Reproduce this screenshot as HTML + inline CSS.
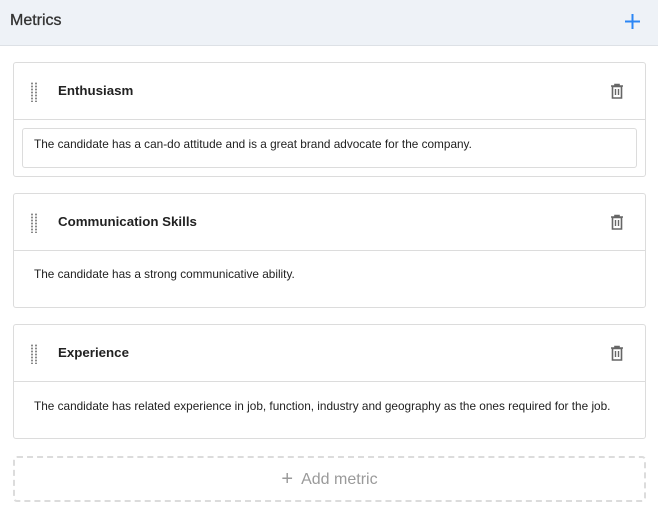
<!DOCTYPE html><html><head><style>
*{box-sizing:border-box;margin:0;padding:0}
body{width:658px;height:514px;background:#fff;font-family:"Liberation Sans",sans-serif;position:relative;overflow:hidden;color:#222}
.hd{position:absolute;left:0;top:0;width:658px;height:46px;background:#eef2f7;border-bottom:1px solid #dde1e6}
.hd .t{position:absolute;left:10px;top:12px;font-size:16px;color:#333;-webkit-text-stroke:0.3px #333}
.plus{position:absolute;left:624px;top:13px}
.card{position:absolute;left:13px;width:633px;height:115px;border:1px solid #dcdcdc;border-radius:3px}
.card .h{height:57px;border-bottom:1px solid #dcdcdc;position:relative}
.card .n{position:absolute;left:44px;top:20px;font-size:13.3px;font-weight:bold;color:#222}
.drag{position:absolute;left:16px;top:19px;width:8px;height:20px;background-image:radial-gradient(circle,#888 0.9px,transparent 1.2px);background-size:4px 3px}
.trash{position:absolute;left:596px;top:20px}
.d{position:absolute;left:20px;font-size:11.8px;color:#222}
.ta{position:absolute;left:8px;top:65px;width:615px;height:40px;border:1px solid #dcdcdc;border-radius:3px}
.add{position:absolute;left:13px;top:456px;width:633px;height:46px;border:2px dashed #dcdcdc;border-radius:4px;text-align:center;font-size:16px;color:#9a9a9a;line-height:42px}
</style></head><body>
<div class="hd"><div class="t">Metrics</div>
<svg class="plus" width="17" height="17" viewBox="0 0 17 17"><path d="M8.5 1v15M1 8.5h15" stroke="#2b86f5" stroke-width="2"/></svg></div>
<div class="card" style="top:62px"><div class="h"><div class="drag"></div><div class="n">Enthusiasm</div>
<svg class="trash" width="14" height="16" viewBox="0 0 14 16"><path d="M1 3h12M5 3V1.5h4V3M2.5 3.5h9V15h-9z" fill="none" stroke="#666" stroke-width="1.6"/><path d="M5.5 6v6M8.5 6v6" stroke="#666" stroke-width="1.4"/></svg></div>
<div class="ta"></div><div class="d" style="top:74px">The candidate has a can-do attitude and is a great brand advocate for the company.</div></div>
<div class="card" style="top:193px"><div class="h"><div class="drag"></div><div class="n">Communication Skills</div>
<svg class="trash" width="14" height="16" viewBox="0 0 14 16"><path d="M1 3h12M5 3V1.5h4V3M2.5 3.5h9V15h-9z" fill="none" stroke="#666" stroke-width="1.6"/><path d="M5.5 6v6M8.5 6v6" stroke="#666" stroke-width="1.4"/></svg></div>
<div class="d" style="top:73px">The candidate has a strong communicative ability.</div></div>
<div class="card" style="top:324px"><div class="h"><div class="drag"></div><div class="n">Experience</div>
<svg class="trash" width="14" height="16" viewBox="0 0 14 16"><path d="M1 3h12M5 3V1.5h4V3M2.5 3.5h9V15h-9z" fill="none" stroke="#666" stroke-width="1.6"/><path d="M5.5 6v6M8.5 6v6" stroke="#666" stroke-width="1.4"/></svg></div>
<div class="d" style="top:74px">The candidate has related experience in job, function, industry and geography as the ones required for the job.</div></div>
<div class="add"><span style="font-size:20px;vertical-align:-1px">+</span>&nbsp; Add metric</div>
</body></html>
